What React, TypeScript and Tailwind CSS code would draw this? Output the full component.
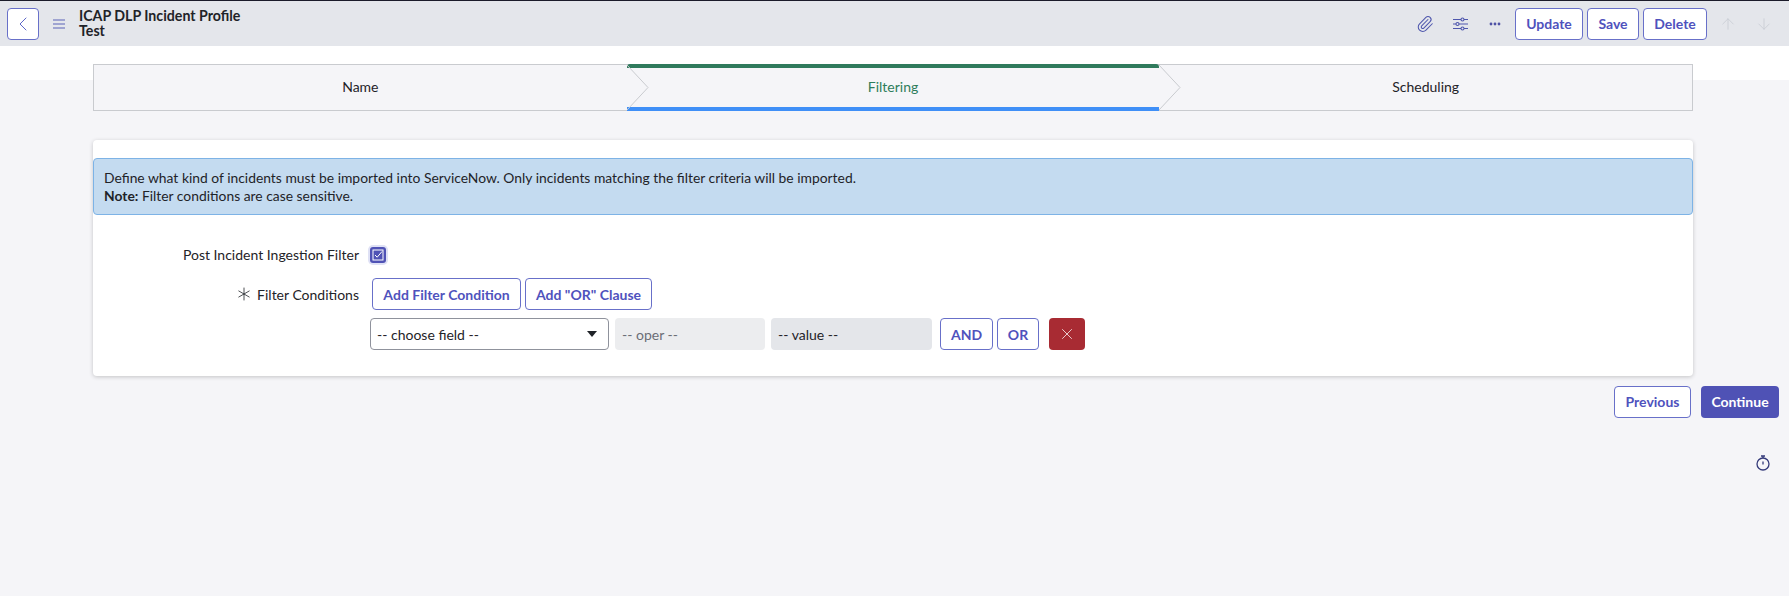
import { ArrowDown, ArrowUp, Asterisk, ChevronLeft, Paperclip, X } from 'lucide-react'

const outlineBtn = 'h-8 rounded-[4px] border border-[#6870c9] bg-white text-[14px] font-bold text-[#4f52bd] flex items-center justify-center'

function Step({ label, active }: { label: string; active?: boolean }) {
  return (
    <div className={`relative flex-1 h-full flex items-center justify-center pb-[3px] text-[14px] ${active ? 'text-[#2e7d5b]' : 'text-[#1f2328]'}`}>
      {active && <div className="absolute left-0 right-0 -top-px h-1 rounded-t-[3px] bg-[#2f7a5c]" />}
      {active && <div className="absolute left-0 right-0 -bottom-px h-1 bg-[#3f8ff7]" />}
      {label}
      {active && (
        <svg className="absolute left-0 top-0" width="22" height="45" viewBox="0 0 22 45" fill="none">
          <path d="M0 0 L21 22.5 L0 45" stroke="#c9cbcf" />
        </svg>
      )}
      {active && (
        <svg className="absolute -right-[22px] top-0" width="22" height="45" viewBox="0 0 22 45" fill="none">
          <path d="M0 0 L21 22.5 L0 45" stroke="#c9cbcf" />
        </svg>
      )}
    </div>
  )
}

export default function App() {
  return (
    <div className="h-[596px] overflow-hidden bg-[#f5f5f8] text-[#1f2328]" style={{ fontFamily: 'Lato, "Liberation Sans", sans-serif' }}>
      <header className="h-[46px] border-t border-[#1b1b2a] bg-[#e4e6eb] flex items-center pl-[7px] pr-[16px]">
        <button className="w-8 h-8 rounded-[4px] border border-[#6870c9] bg-white flex items-center justify-center text-[#5c66c9]">
          <ChevronLeft size={24} strokeWidth={1} />
        </button>
        <svg className="ml-[14px]" width="12" height="10" viewBox="0 0 12 10" fill="none" stroke="#5a62b8" strokeWidth="1.2">
          <path d="M0 1h12M0 5h12M0 9h12" />
        </svg>
        <div className="ml-[14px] pb-px text-[14.2px] leading-[15px] font-bold">
          <div>ICAP DLP Incident Profile</div>
          <div>Test</div>
        </div>
        <div className="ml-auto flex items-center">
          <Paperclip size={18} strokeWidth={1.4} className="text-[#4f57ad]" />
          <svg className="ml-[19px]" width="15" height="14" viewBox="0 0 15 14" fill="none" stroke="#4f57ad" strokeWidth="1.1">
            <path d="M0 2.5h8M11 2.5h4M0 7h3M6 7h9M0 11.5h8M11 11.5h4" />
            <circle cx="9.5" cy="2.5" r="1.5" />
            <circle cx="4.5" cy="7" r="1.5" />
            <circle cx="9.5" cy="11.5" r="1.5" />
          </svg>
          <svg className="ml-[21px] mr-[14px]" width="12" height="4" viewBox="0 0 12 4" fill="#4f52a5">
            <circle cx="2" cy="2" r="1.4" />
            <circle cx="6" cy="2" r="1.4" />
            <circle cx="10" cy="2" r="1.4" />
          </svg>
          <button className={`${outlineBtn} w-[68px]`}>Update</button>
          <button className={`${outlineBtn} w-[52px] ml-[4px]`}>Save</button>
          <button className={`${outlineBtn} w-[64px] ml-[4px]`}>Delete</button>
          <ArrowUp size={18} strokeWidth={1} className="ml-[12px] text-[#c6c9d2]" />
          <ArrowDown size={18} strokeWidth={1} className="ml-[18px] text-[#c6c9d2]" />
        </div>
      </header>

      <main className="bg-[linear-gradient(#ffffff_34px,#f5f5f8_34px)] pt-[18px]">
        <div className="ml-[93px] w-[1600px] h-[47px] border border-[#c9cbcf] bg-[#f5f5f8] flex">
          <Step label="Name" />
          <Step label="Filtering" active />
          <Step label="Scheduling" />
        </div>

        <section className="ml-[93px] mt-[29px] w-[1600px] h-[236px] rounded-[4px] bg-white shadow-[0_1px_4px_rgba(0,0,0,0.2)] pt-[18px]">
          <div className="h-[57px] rounded-[4px] border border-[#7db3e6] bg-[#c4dbf0] px-[10px] py-[10px] text-[13.86px] leading-[18px]">
            <div>Define what kind of incidents must be imported into ServiceNow. Only incidents matching the filter criteria will be imported.</div>
            <div><b>Note:</b> Filter conditions are case sensitive.</div>
          </div>

          <div className="mt-[31px] flex items-center h-[17px]">
            <div className="w-[266px] text-right text-[14px]">Post Incident Ingestion Filter</div>
            <div className="ml-[11px] w-4 h-4 rounded-[3px] bg-[#4f52b5] ring-2 ring-[#dfe1f5] flex items-center justify-center">
              <svg width="12" height="12" viewBox="0 0 12 12" fill="none" stroke="#ffffff" strokeWidth="1">
                <rect x="1" y="1" width="10" height="10" />
                <path d="M3 6l2.2 2.2L10 2.5" />
              </svg>
            </div>
          </div>

          <div className="mt-[15px] flex items-center">
            <div className="w-[266px] flex items-center justify-end text-[14px]">
              <Asterisk size={24} strokeWidth={0.8} className="mr-px" />
              Filter Conditions
            </div>
            <button className={`${outlineBtn} ml-[13px] w-[149px]`}>Add Filter Condition</button>
            <button className={`${outlineBtn} ml-[4px] w-[127px]`}>Add "OR" Clause</button>
          </div>

          <div className="mt-2 ml-[277px] flex items-center">
            <div className="w-[239px] h-8 rounded-[4px] border border-[#8f929c] bg-white flex items-center justify-between pl-[6px] pr-[11px] text-[14px]">
              -- choose field --
              <span className="w-0 h-0 border-x-[5px] border-x-transparent border-t-[6px] border-t-[#1f2328]" />
            </div>
            <div className="ml-[6px] w-[150px] h-8 rounded-[4px] bg-[#ecedef] flex items-center pl-[7px] text-[14px] text-[#6b6e76]">-- oper --</div>
            <div className="ml-[6px] w-[161px] h-8 rounded-[4px] bg-[#e4e6ea] flex items-center pl-[7px] text-[14px]">-- value --</div>
            <button className={`${outlineBtn} ml-[8px] w-[53px]`}>AND</button>
            <button className={`${outlineBtn} ml-[4px] w-[42px]`}>OR</button>
            <button className="ml-[10px] w-9 h-8 rounded-[4px] bg-[#a82b33] flex items-center justify-center text-white">
              <X size={18} strokeWidth={1} />
            </button>
          </div>
        </section>

        <div className="mt-[10px] pr-[10px] flex justify-end">
          <button className={`${outlineBtn} w-[77px] pb-[2px]`}>Previous</button>
          <button className="ml-[10px] w-[78px] h-8 pb-[2px] rounded-[4px] bg-[#4f52b5] text-[14px] font-bold text-white">Continue</button>
        </div>

        <div className="mt-[37px] pr-[19px] flex justify-end">
          <svg width="14" height="16" viewBox="0 0 14 16" fill="none" stroke="#343a7a" strokeWidth="1.3">
            <circle cx="7" cy="9" r="6" />
            <path d="M5 1h4M7 1v2M7 6.5v3" />
          </svg>
        </div>
      </main>
    </div>
  )
}
